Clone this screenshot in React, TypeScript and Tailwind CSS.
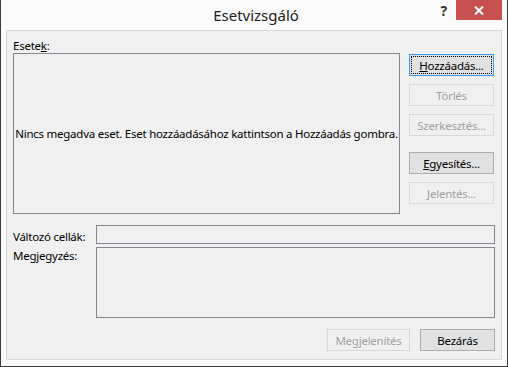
import React from "react";

const FONT = { fontFamily: '"Noto Sans", "Open Sans", sans-serif' };

function Btn({
  children,
  disabled,
  focused,
  className = "",
}: {
  children: React.ReactNode;
  disabled?: boolean;
  focused?: boolean;
  className?: string;
}) {
  if (disabled) {
    return (
      <div className={`h-[22px] flex items-center justify-center border border-[#d9d9d9] bg-[#f0f0f0] text-[#a0a0a0] ${className}`}>
        {children}
      </div>
    );
  }
  return (
    <div
      className={`h-[22px] flex items-center justify-center border bg-[#e1e1e1] text-black ${
        focused ? "border-[#3c9af0] p-[1px]" : "border-[#adadad]"
      } ${className}`}
    >
      {focused ? (
        <div className="w-full h-full flex items-center justify-center border border-dotted border-black">{children}</div>
      ) : (
        children
      )}
    </div>
  );
}

export default function App() {
  return (
    <div className="w-[508px] h-[367px] bg-[#fbfbfb] border-x border-b border-[#3a3a3a] flex flex-col text-[11.5px] leading-[15px] tracking-[-0.25px] text-black" style={FONT}>
      {/* Title bar */}
      <div className="h-[30px] flex items-start relative">
        <div className="flex-1 text-center text-[15px] leading-[30px] tracking-normal text-[#222] pl-[4px]">Esetvizsgáló</div>
        <div className="absolute right-[60px] top-[3px] text-[14px] font-bold text-[#333]">?</div>
        <div className="absolute right-[5px] top-0 w-[46px] h-[20px] bg-[#c75050] flex items-center justify-center">
          <svg width="10" height="9" viewBox="0 0 10 9">
            <path d="M1 0.5 L9 8.5 M9 0.5 L1 8.5" stroke="white" strokeWidth="2" />
          </svg>
        </div>
      </div>

      {/* Client area */}
      <div className="mx-[5px] mb-[6px] flex-1 border border-[#d9d9d9] bg-[#f0f0f0] pl-[6px] pr-[6px] pt-[7px] pb-[7px] flex flex-col">
        <div className="flex">
          <div className="flex flex-col w-[387px]">
            <div className="h-[15px]">
              Esete<span className="underline">k</span>:
            </div>
            <div className="h-[161px] border border-[#828790] bg-[#f0f0f0] flex items-center justify-center whitespace-nowrap">
              Nincs megadva eset. Eset hozzáadásához kattintson a Hozzáadás gombra.
            </div>
          </div>
          <div className="ml-[9px] w-[85px] pt-[16px] flex flex-col">
            <Btn focused>
              <span>
                <span className="underline">H</span>ozzáadás...
              </span>
            </Btn>
            <Btn disabled className="mt-[8px]">Törlés</Btn>
            <Btn disabled className="mt-[8px]">Szerkesztés...</Btn>
            <Btn className="mt-[16px]">
              <span>
                <span className="underline">E</span>gyesítés...
              </span>
            </Btn>
            <Btn disabled className="mt-[8px]">Jelentés...</Btn>
          </div>
        </div>

        <div className="flex mt-[11px]">
          <div className="w-[83px] pt-[4px]">Változó cellák:</div>
          <div className="flex-1 h-[19px] border border-[#828790] bg-[#f0f0f0]" />
        </div>
        <div className="flex mt-[3px]">
          <div className="w-[83px] pt-[1px]">Megjegyzés:</div>
          <div className="flex-1 h-[71px] border border-[#828790] bg-[#f0f0f0]" />
        </div>

        <div className="flex justify-end mt-[11px]">
          <Btn disabled className="w-[83px]">Megjelenítés</Btn>
          <Btn className="w-[75px] ml-[10px]">Bezárás</Btn>
        </div>
      </div>
    </div>
  );
}
